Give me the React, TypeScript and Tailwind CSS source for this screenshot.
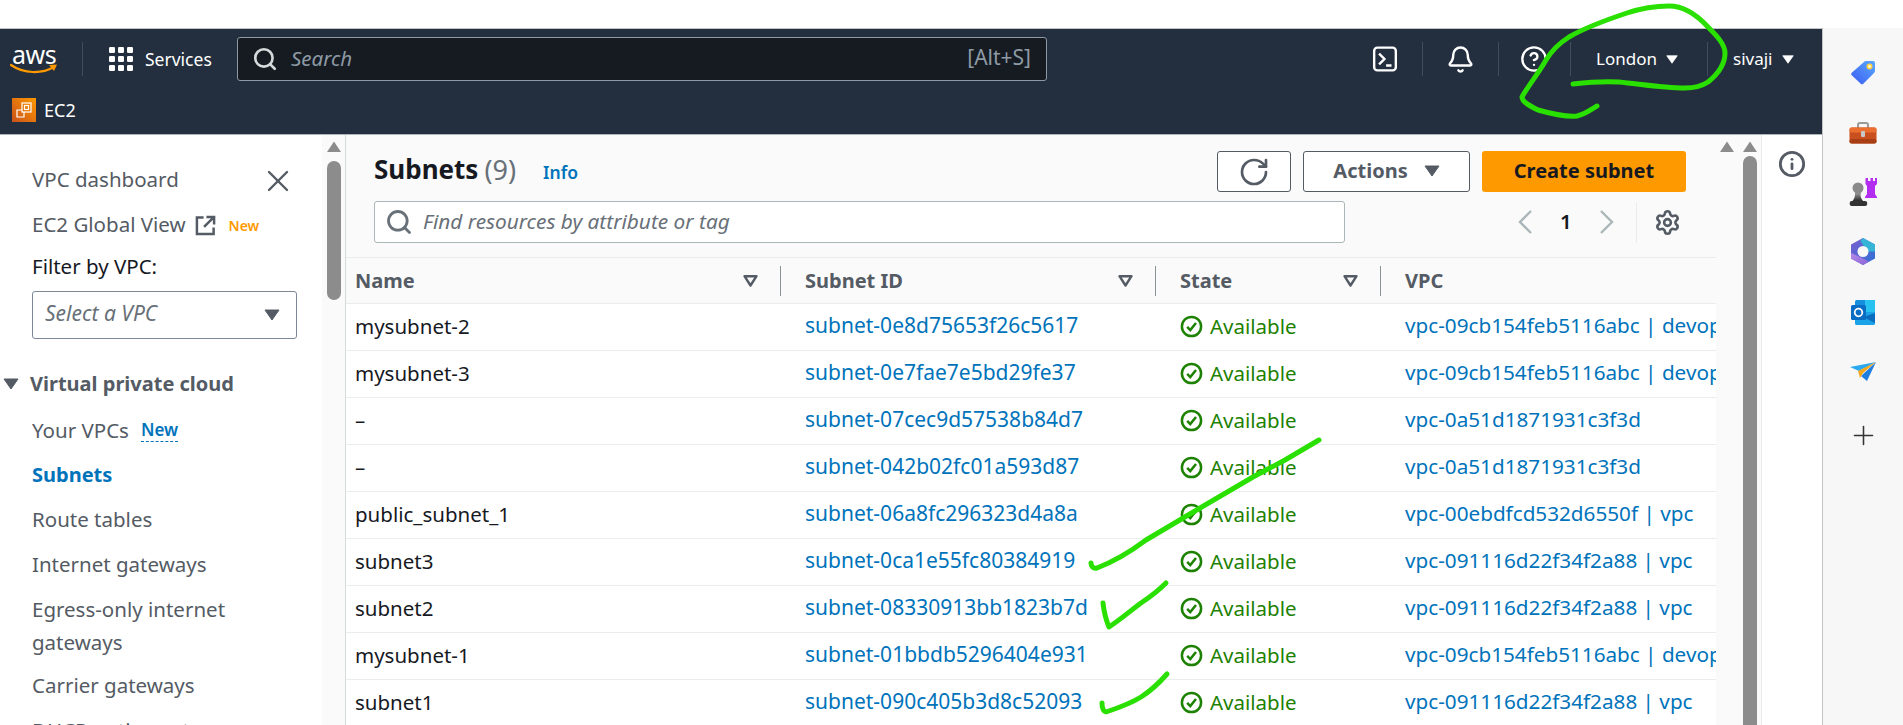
import React from "react";
import { Search, X, Bell, CircleHelp, RotateCw, Settings, Info, Plus } from "lucide-react";

const rows = [
  ["mysubnet-2", "subnet-0e8d75653f26c5617", "vpc-09cb154feb5116abc | devop"],
  ["mysubnet-3", "subnet-0e7fae7e5bd29fe37", "vpc-09cb154feb5116abc | devop"],
  ["–", "subnet-07cec9d57538b84d7", "vpc-0a51d1871931c3f3d"],
  ["–", "subnet-042b02fc01a593d87", "vpc-0a51d1871931c3f3d"],
  ["public_subnet_1", "subnet-06a8fc296323d4a8a", "vpc-00ebdfcd532d6550f | vpc"],
  ["subnet3", "subnet-0ca1e55fc80384919", "vpc-091116d22f34f2a88 | vpc"],
  ["subnet2", "subnet-08330913bb1823b7d", "vpc-091116d22f34f2a88 | vpc"],
  ["mysubnet-1", "subnet-01bbdb5296404e931", "vpc-09cb154feb5116abc | devop"],
  ["subnet1", "subnet-090c405b3d8c52093", "vpc-091116d22f34f2a88 | vpc"],
];

const Caret = ({ className = "" }: { className?: string }) => (
  <svg viewBox="0 0 16 12" className={className}>
    <path d="M1 1h14L8 11z" fill="currentColor" stroke="currentColor" strokeLinejoin="round" />
  </svg>
);

const FilterIcon = () => (
  <svg viewBox="0 0 15 12" className="w-[15px] h-[12px] text-[#545b64]">
    <path d="M1.500 1.200h12L7.500 10.500z" fill="none" stroke="currentColor" strokeWidth="2.400" strokeLinejoin="round" />
  </svg>
);

const Up = ({ className = "" }: { className?: string }) => (
  <svg viewBox="0 0 14 11" className={`w-[14px] h-[11px] text-[#8c8c8c] ${className}`}>
    <path d="M7 0.500L14 11H0z" fill="currentColor" />
  </svg>
);

const Chevron = ({ dir }: { dir: "l" | "r" }) => (
  <svg viewBox="0 0 14 24" className="w-[14px] h-[24px] text-[#aab7b8]" fill="none" stroke="currentColor" strokeWidth="2.400">
    <path d={dir === "l" ? "M13 1L2 12l11 11" : "M1 1l11 11L1 23"} />
  </svg>
);

const GridIcon = () => (
  <svg viewBox="0 0 24 24" className="w-[24px] h-[24px] text-white">
    {[0, 9, 18].flatMap((y) =>
      [0, 9, 18].map((x) => <rect key={`${x}-${y}`} x={x} y={y} width="6" height="6" rx="1.200" fill="currentColor" />),
    )}
  </svg>
);

const TerminalIcon = () => (
  <svg viewBox="0 0 24 24" className="w-[26px] h-[26px] text-white" fill="none" stroke="currentColor" strokeWidth="2.200">
    <rect x="2" y="1.500" width="20" height="21" rx="3" />
    <path d="M6.500 7l5 5-5 5M13 18h5" />
  </svg>
);

const CheckCircle = () => (
  <svg viewBox="0 0 24 24" className="w-[23px] h-[23px] shrink-0 text-[#1d8102]" fill="none" stroke="currentColor">
    <circle cx="12" cy="12" r="10" strokeWidth="2.600" />
    <path d="M7.500 12.500l3.200 3.300 6-7.500" strokeWidth="2.600" />
  </svg>
);

const ExternalIcon = () => (
  <svg viewBox="0 0 22 22" className="w-[21px] h-[21px] text-[#545b64]" fill="none" stroke="currentColor" strokeWidth="2.600">
    <path d="M9 2.500H2v17.500h17.500V13M12 2h8v8M20 2L9.500 12.500" />
  </svg>
);

const Ec2Icon = () => (
  <svg viewBox="0 0 24 24" className="w-[24px] h-[24px]">
    <defs>
      <linearGradient id="ec2g" x1="0" y1="1" x2="1" y2="0">
        <stop offset="0" stopColor="#c8511b" />
        <stop offset="1" stopColor="#ff9900" />
      </linearGradient>
    </defs>
    <rect width="24" height="24" fill="url(#ec2g)" />
    <g fill="none" stroke="#fff" strokeWidth="1.200">
      <rect x="10" y="5" width="9" height="9" />
      <path d="M10 12H5v7h7v-5" />
      <rect x="12.500" y="7.500" width="4" height="4" />
    </g>
  </svg>
);

const TagIcon = () => (
  <svg viewBox="0 0 24 25" className="w-[24px] h-[25px]">
    <defs>
      <linearGradient id="tagg" x1="0" y1="1" x2="1" y2="0">
        <stop offset="0" stopColor="#3b5cf0" />
        <stop offset="1" stopColor="#5aa9ff" />
      </linearGradient>
    </defs>
    <path d="M15 1h7a2 2 0 0 1 2 2v8a3 3 0 0 1-1 2L12.500 23.500a2 2 0 0 1-3 0L1 15.500a2 2 0 0 1 0-3L13 2a3 3 0 0 1 2-1z" fill="url(#tagg)" />
    <circle cx="18.500" cy="6.500" r="3" fill="#ffd23f" />
    <circle cx="18.500" cy="6.500" r="1.300" fill="#fff" />
  </svg>
);

const ToolboxIcon = () => (
  <svg viewBox="0 0 28 22" className="w-[28px] h-[22px]">
    <path d="M9 6V3a2 2 0 0 1 2-2h6a2 2 0 0 1 2 2v3" fill="none" stroke="#9a9a9a" strokeWidth="2" />
    <rect x="0.500" y="5.500" width="27" height="16" rx="2" fill="#c9501e" />
    <rect x="0.500" y="5.500" width="27" height="5" rx="2" fill="#ec6f32" />
    <rect x="0.500" y="17" width="27" height="4.500" rx="2" fill="#a83f14" />
    <rect x="12" y="9" width="4" height="6" rx="1" fill="#c8c8c8" />
  </svg>
);

const ChessIcon = () => (
  <svg viewBox="0 0 28 28" className="w-[28px] h-[28px]">
    <defs>
      <linearGradient id="chessg" x1="0" y1="0" x2="0" y2="1">
        <stop offset="0" stopColor="#9a9a9a" />
        <stop offset="1" stopColor="#2b2b2b" />
      </linearGradient>
    </defs>
    <path d="M16.500 0h2.500v3h2.500V0h2.500v3h2V0H28v6l-2 2v8l2 3v1H16v-1l2-3V8l-1.500-2z" fill="#b32df0" />
    <path d="M6 15h6l-.5 1.500C11.500 19 12.500 21 14 23H3.500C5 21 6 19 6 16.500z" fill="url(#chessg)" />
    <circle cx="9" cy="10" r="5.500" fill="#8a8a8a" />
    <rect x="0.700" y="23" width="17.500" height="5" rx="2" fill="#333" />
  </svg>
);

const CopilotIcon = () => (
  <svg viewBox="0 0 24 27" className="w-[24px] h-[27px]">
    <defs>
      <linearGradient id="cp1" x1="0" y1="0" x2="1" y2="1">
        <stop offset="0" stopColor="#7a5fd0" />
        <stop offset="1" stopColor="#2d6fd6" />
      </linearGradient>
      <linearGradient id="cp2" x1="0" y1="0" x2="1" y2="1">
        <stop offset="0" stopColor="#b58ae8" />
        <stop offset="1" stopColor="#8a64d8" />
      </linearGradient>
    </defs>
    <path d="M12 0l12 6.500v14L12 27 0 20.500v-14z" fill="url(#cp1)" />
    <path d="M12 0l12 6.500v7h-7.500L9.500 3z" fill="#35b4d8" />
    <path d="M0 15l7 3 11 5.500L12 27 0 20.500z" fill="url(#cp2)" />
    <circle cx="12" cy="13.500" r="5.500" fill="#f7f7f7" />
  </svg>
);

const OutlookIcon = () => (
  <svg viewBox="0 0 24 25" className="w-[24px] h-[25px]">
    <rect x="4" y="0" width="20" height="13" rx="1.500" fill="#1490df" />
    <rect x="14" y="0" width="10" height="13" fill="#28c2f0" />
    <path d="M4 12l20 0v11.500a1.500 1.500 0 0 1-1.500 1.500h-17A1.500 1.500 0 0 1 4 23.500z" fill="#1aa3e8" />
    <path d="M24 13v10L12 17z" fill="#0a6dbd" />
    <rect x="0" y="5" width="15" height="15" rx="1.500" fill="#0b6cc4" />
    <circle cx="7.500" cy="12.500" r="3.800" fill="none" stroke="#fff" strokeWidth="1.800" />
  </svg>
);

const SendIcon = () => (
  <svg viewBox="0 0 26 19" className="w-[26px] h-[19px]">
    <path d="M0 5L26 0 9 9z" fill="#2aa8f0" />
    <path d="M26 0L17 19l-6-5z" fill="#1f7fe0" />
    <path d="M26 0L8 9l2 7 3-5z" fill="#f5a81c" />
  </svg>
);

const Scribbles = () => (
  <svg
    className="absolute left-0 top-0 pointer-events-none"
    width="1903"
    height="725"
    viewBox="0 0 1903 725"
    fill="none"
    stroke="#2ae000"
    strokeLinecap="round"
    strokeLinejoin="round"
    strokeWidth="5"
  >
    <path d="M1573 84C1590 82 1604 81 1619 82C1640 84 1662 88 1685 88C1696 88 1702 86 1708 82C1718 74 1725 64 1725 53C1725 44 1716 35 1708 27C1696 14 1684 6 1669 6C1655 6 1642 8 1627 13C1606 20 1586 27 1569 37C1558 44 1552 50 1546 60C1538 74 1528 86 1522 97C1522 102 1530 106 1538 110C1552 114 1566 117 1577 116C1586 114 1590 110 1597 106" />
    <path d="M1319 440L1285 460L1253 477L1195 511L1146 540C1130 552 1110 563 1097 568C1093 569 1091 566 1091 563" />
    <path d="M1103 603C1104 612 1106 620 1109 627C1120 620 1130 611 1141 603C1150 597 1159 590 1166 583" />
    <path d="M1102 703C1102 708 1103 711 1106 712C1118 708 1130 704 1141 697C1152 690 1160 682 1167 674" />
  </svg>
);

const navClass = "block text-[20.5px] text-[#545b64] leading-[31px] pb-[2px] whitespace-nowrap";
const tableCols = "grid grid-cols-[449px_375px_225px_321px]";

export default function App() {
  return (
    <div className="relative w-[1903px] h-[725px] overflow-hidden bg-white text-[20.5px] text-[#16191f]" style={{ fontFamily: '"Noto Sans", sans-serif' }}>
      <div className="h-[28px] bg-white" />
      <div className="flex h-[697px]">
        <div className="flex-1 flex flex-col min-w-0">
          {/* Header */}
          <header className="h-[106px] shrink-0 bg-[#232f3e] border-t border-[#c4c4c4] text-white flex flex-col">
            <div className="h-[44px] mt-[8px] flex items-center">
              <div className="w-[83px] h-[34px] flex items-center border-r border-[#414d5c] pl-[10px]">
                <div className="relative w-[48px] h-[30px]">
                  <span className="block pl-[2px] text-[25px] leading-[20px] tracking-[-0.5px]">aws</span>
                  <svg viewBox="0 0 48 12" className="absolute left-0 bottom-0 w-[48px] h-[12px]">
                    <path d="M1 3C14 12 32 12 44 5" fill="none" stroke="#ff9900" strokeWidth="2.200" strokeLinecap="round" />
                    <path d="M39 3l8-0.500-3 6.500" fill="#ff9900" />
                  </svg>
                </div>
              </div>
              <div className="ml-[26px]"><GridIcon /></div>
              <span className="ml-[12px] text-[17.5px] w-[79px] whitespace-nowrap">Services</span>
              <div className="ml-[13px] w-[810px] h-[44px] bg-[#161b22] border border-[#8d9aa5] rounded-[3px] flex items-center pl-[14px] pr-[15px]">
                <Search className="w-[26px] h-[26px] text-[#d5dbdb]" strokeWidth={2.4} />
                <span className="ml-[13px] italic text-[#8d9aa5] text-[20.5px] pb-[2px]">Search</span>
                <span className="ml-auto text-[#8d9aa5] text-[21px] pb-[2px]">[Alt+S]</span>
              </div>
              <div className="ml-[325px]"><TerminalIcon /></div>
              <div className="w-px h-[34px] bg-[#414d5c] ml-[24px]" />
              <Bell className="ml-[23px] w-[29px] h-[29px]" strokeWidth={2} />
              <div className="w-px h-[34px] bg-[#414d5c] ml-[23px]" />
              <CircleHelp className="ml-[21px] w-[28px] h-[28px]" strokeWidth={2} />
              <div className="w-px h-[34px] bg-[#414d5c] ml-[22px]" />
              <div className="w-[137px] h-[34px] flex items-center border-r border-[#414d5c] pl-[25px]">
                <span className="text-[17px]">London</span>
                <Caret className="w-[12px] h-[9px] ml-[9px]" />
              </div>
              <div className="flex items-center pl-[25px]">
                <span className="text-[17px]">sivaji</span>
                <Caret className="w-[12px] h-[9px] ml-[10px]" />
              </div>
            </div>
            <div className="flex items-center pl-[12px] mt-[17px] h-[24px]">
              <Ec2Icon />
              <span className="ml-[8px] text-[18px]">EC2</span>
            </div>
          </header>

          <div className="flex-1 min-h-0 flex border-t border-[#aab7b8]">
            {/* Side nav */}
            <nav className="w-[322px] shrink-0 pl-[32px] pr-[24px] pt-[29px] overflow-hidden">
              <div className="flex items-center justify-between h-[33px]">
                <span className={navClass}>VPC dashboard</span>
                <X className="w-[36px] h-[36px] text-[#545b64] mr-[2px]" strokeWidth={1.6} />
              </div>
              <div className="flex items-center h-[33px] mt-[12px]">
                <span className={navClass}>EC2 Global View</span>
                <span className="ml-[9px]"><ExternalIcon /></span>
                <span className="ml-[13px] text-[14px] font-semibold text-[#ff9900]">New</span>
              </div>
              <div className="mt-[13px] leading-[22px] pb-[2px] text-[20.5px] text-[#16191f]">Filter by VPC:</div>
              <div className="mt-[12px] w-[265px] h-[48px] border border-[#7d8998] rounded-[3px] flex items-center pl-[12px] pr-[16px] bg-white">
                <span className="italic text-[21px] text-[#687078] pb-[2px]">Select a VPC</span>
                <Caret className="ml-auto w-[16px] h-[12px] text-[#545b64]" />
              </div>
              <div className="flex items-center -ml-[29px] mt-[28px] h-[33px] whitespace-nowrap">
                <Caret className="w-[16px] h-[12px] text-[#545b64]" />
                <span className="ml-[11px] text-[20px] font-bold text-[#545b64]">Virtual private cloud</span>
              </div>
              <div className="flex items-center h-[33px] mt-[14px]">
                <span className="text-[20.5px] text-[#545b64] leading-[33px]">Your VPCs</span>
                <span className="ml-[12px] text-[17px] font-semibold text-[#0073bb] leading-[22px] border-b border-dashed border-[#0073bb]">New</span>
              </div>
              <div className="text-[20px] font-bold text-[#0073bb] leading-[31px] pb-[2px] mt-[12px]">Subnets</div>
              <div className={`${navClass} mt-[12px]`}>Route tables</div>
              <div className={`${navClass} mt-[12px]`}>Internet gateways</div>
              <div className="mt-[11px] text-[20.5px] text-[#545b64] leading-[33px] whitespace-nowrap">Egress-only internet<br />gateways</div>
              <div className={`${navClass} mt-[11px]`}>Carrier gateways</div>
              <div className={`${navClass} mt-[12px]`}>DHCP option sets</div>
            </nav>
            <div className="w-[24px] shrink-0 bg-[#fafafa] border-r border-[#d5dbdb] flex flex-col items-center pt-[6px]">
              <Up />
              <div className="mt-[9px] w-[14px] h-[139px] bg-[#8c8c8c] rounded-full" />
            </div>

            {/* Main */}
            <main className="w-[1370px] shrink-0 min-w-0 bg-[#fafafa] flex flex-col overflow-hidden">
              <div className="pl-[28px] pr-[30px] pt-[16px] pb-[14px]">
                <div className="flex items-center h-[41px]">
                  <h1 className="text-[26px] font-bold leading-[37px] pb-[4px] h-[41px]">Subnets</h1>
                  <span className="ml-[6px] text-[27px] text-[#687078] pb-[3px]">(9)</span>
                  <span className="ml-[27px] text-[17.5px] font-semibold text-[#0073bb] mt-[2px]">Info</span>
                  <button className="ml-auto w-[74px] h-[41px] bg-white border border-[#545b64] rounded-[3px] flex items-center justify-center">
                    <RotateCw className="w-[32px] h-[32px] text-[#545b64]" strokeWidth={2} />
                  </button>
                  <button className="ml-[12px] w-[167px] h-[41px] pb-[2px] bg-white border border-[#545b64] rounded-[3px] flex items-center justify-center text-[#545b64] font-bold text-[20px]">
                    Actions
                    <Caret className="ml-[16px] w-[16px] h-[12px]" />
                  </button>
                  <button className="ml-[12px] w-[204px] h-[41px] pb-[2px] bg-[#ff9900] rounded-[3px] font-bold text-[20px] text-[#16191f]">Create subnet</button>
                </div>
                <div className="flex items-center mt-[9px] h-[42px]">
                  <div className="w-[971px] h-[42px] bg-white border border-[#aab7b8] rounded-[3px] flex items-center pl-[10px]">
                    <Search className="w-[28px] h-[28px] text-[#687078]" strokeWidth={2.4} />
                    <span className="ml-[10px] italic text-[20.8px] text-[#687078]">Find resources by attribute or tag</span>
                  </div>
                  <div className="ml-[173px]"><Chevron dir="l" /></div>
                  <span className="ml-[28px] w-[12px] text-[20.5px] font-semibold pb-[2px]">1</span>
                  <div className="ml-[28px]"><Chevron dir="r" /></div>
                  <div className="ml-[22px] h-[41px] w-px bg-[#eaeded]" />
                  <Settings className="ml-[17px] w-[27px] h-[27px] text-[#545b64]" strokeWidth={2.3} />
                </div>
              </div>

              <div className="flex-1 min-h-0 overflow-hidden">
                <div className={`${tableCols} h-[47px] border-y border-[#eaeded] items-center font-bold text-[20px] text-[#545b64]`}>
                  {["Name", "Subnet ID", "State"].map((h, i) => (
                    <div key={h} className={`h-[30px] pr-[14px] flex items-center justify-between ${i === 0 ? "pl-[9px]" : "pl-[10px]"}`}>
                      <span>{h}</span>
                      <span className="flex items-center gap-[22px]">
                        <FilterIcon />
                        <span className="w-px h-[30px] bg-[#879596]" />
                      </span>
                    </div>
                  ))}
                  <div className="pl-[10px]">VPC</div>
                </div>
                {rows.map((r) => (
                  <div key={r[1]} className={`${tableCols} h-[47px] pb-[2px] bg-white border-b border-[#eaeded] items-center whitespace-nowrap`}>
                    <div className="pl-[9px]">{r[0]}</div>
                    <div className="pl-[10px] text-[21px] text-[#0073bb]">{r[1]}</div>
                    <div className="pl-[10px] flex items-center gap-[7px] text-[#1d8102]">
                      <CheckCircle />
                      Available
                    </div>
                    <div className="pl-[10px] text-[20.7px] text-[#0073bb] overflow-hidden">{r[2]}</div>
                  </div>
                ))}
              </div>
            </main>

            <div className="w-[46px] shrink-0 bg-[#fafafa] border-r border-[#eaeded] flex">
              <div className="w-[23px] pt-[6px] flex justify-center"><Up /></div>
              <div className="w-[23px] pt-[6px] flex flex-col items-center">
                <Up />
                <div className="mt-[4px] w-[14px] flex-1 bg-[#8c8c8c] rounded-t-full" />
              </div>
            </div>
            <div className="flex-1 pt-[15px] flex justify-center bg-white">
              <Info className="w-[28px] h-[28px] text-[#545b64]" strokeWidth={2.4} />
            </div>
          </div>
        </div>

        {/* Browser side bar */}
        <aside className="w-[81px] shrink-0 bg-[#f7f7f7] border-l border-[#c4c4c4] flex flex-col items-center pt-[32px]">
          <div className="h-[62px]"><TagIcon /></div>
          <div className="h-[56px]"><ToolboxIcon /></div>
          <div className="h-[60px]"><ChessIcon /></div>
          <div className="h-[62px]"><CopilotIcon /></div>
          <div className="h-[62px]"><OutlookIcon /></div>
          <div className="h-[58px]"><SendIcon /></div>
          <Plus className="w-[31px] h-[31px] text-[#333]" strokeWidth={1.2} />
        </aside>
      </div>
      <Scribbles />
    </div>
  );
}
